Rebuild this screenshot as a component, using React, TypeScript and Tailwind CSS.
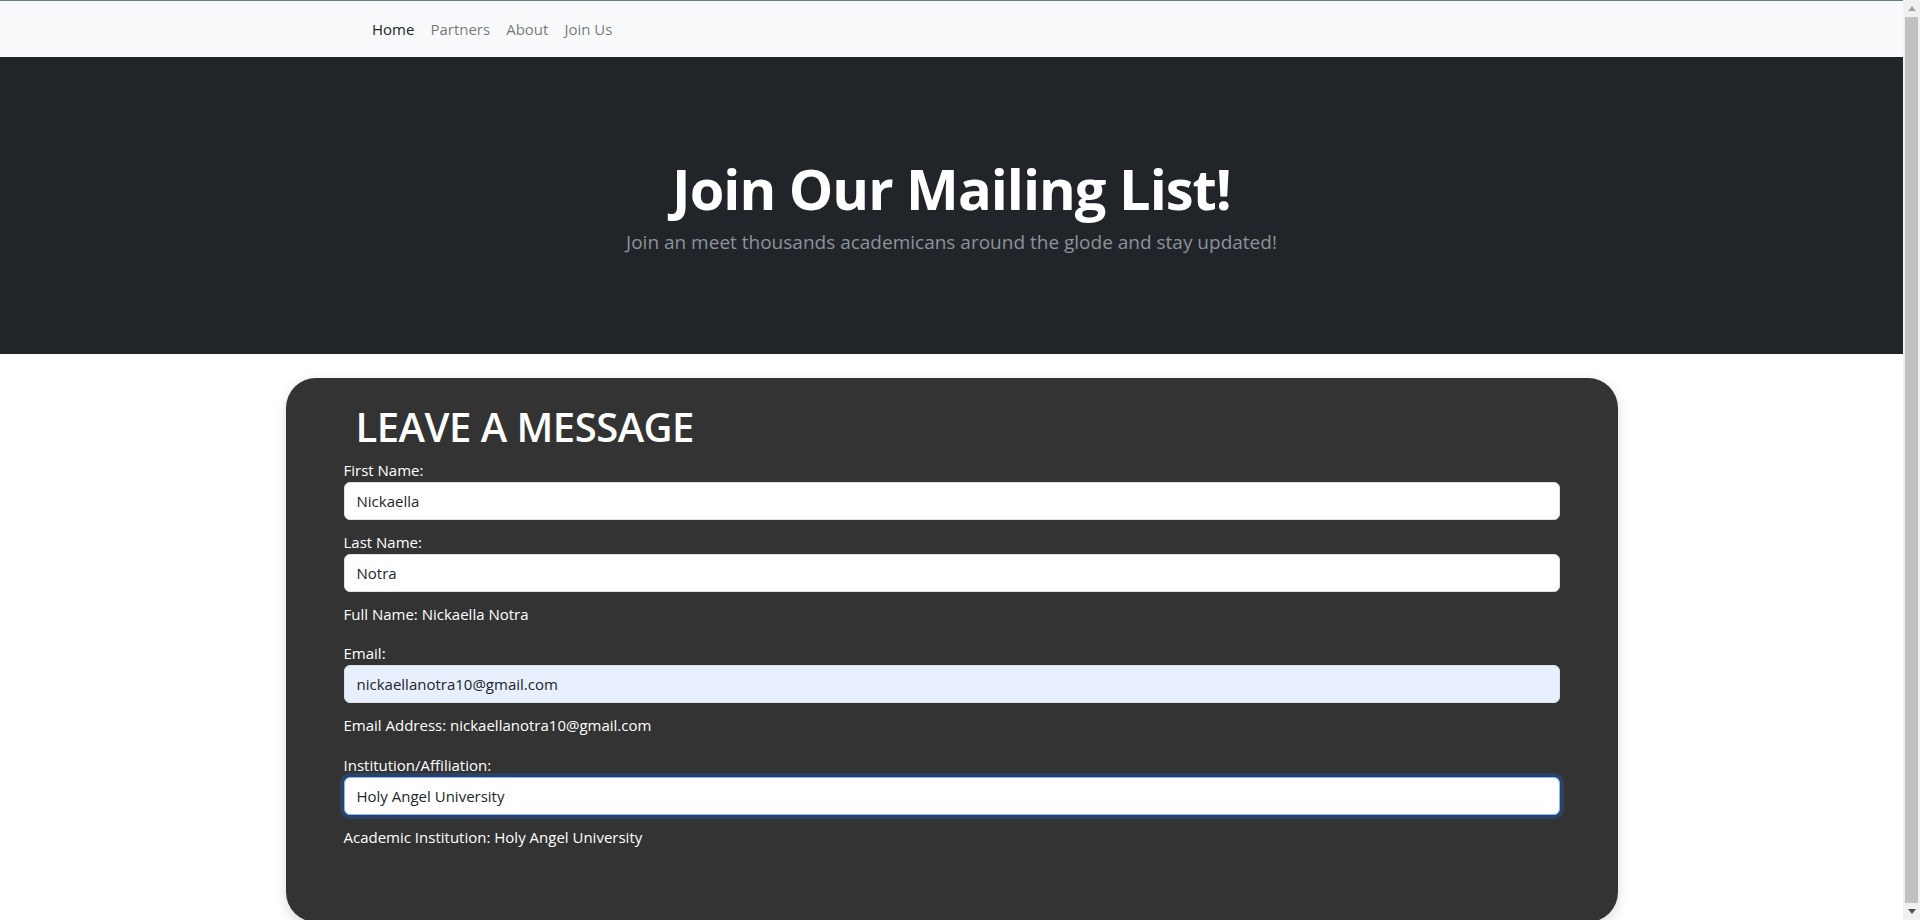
const Field = ({
	label,
	value,
	className = "bg-white",
	focused = false,
}: {
	label: string;
	value: string;
	className?: string;
	focused?: boolean;
}) => (
	<div>
		<label className="block text-[15px] leading-6 text-white">{label}</label>
		<input
			readOnly
			value={value}
			className={`block h-[38px] w-full rounded-md border px-3 text-[15px] text-[#212529] outline-none ${className} ${
				focused
					? "border-[#86b7fe] shadow-[0_0_0_4px_rgba(13,110,253,0.25)]"
					: "border-[#dee2e6]"
			}`}
		/>
	</div>
);

const Scrollbar = () => (
	<aside className="flex h-full w-[17px] shrink-0 flex-col bg-[#f1f1f1]">
		<div className="flex h-[17px] items-center justify-center">
			<svg width="8" height="5" viewBox="0 0 8 5">
				<path d="M0 5 L4 0 L8 5 Z" fill="#a3a3a3" />
			</svg>
		</div>
		<div className="mx-[2px] flex-1 bg-[#c1c1c1]" />
		<div className="flex h-[17px] items-center justify-center">
			<svg width="8" height="5" viewBox="0 0 8 5">
				<path d="M0 0 L8 0 L4 5 Z" fill="#505050" />
			</svg>
		</div>
	</aside>
);

const App = () => {
	return (
		<div className="flex h-screen overflow-hidden bg-white font-['Open_Sans',sans-serif]">
			<div className="w-[1903px] shrink-0">
				<nav className="h-[57px] border-t border-[#6c7a83] bg-[#f8f9fa]">
					<ul className="flex h-full items-center pl-[364px] text-[15px]">
						<li>
							<a href="#home" className="block px-2 py-2 text-[#212529]">
								Home
							</a>
						</li>
						<li>
							<a href="#partners" className="block px-2 py-2 text-black/55">
								Partners
							</a>
						</li>
						<li>
							<a href="#about" className="block px-2 py-2 text-black/55">
								About
							</a>
						</li>
						<li>
							<a href="#join" className="block px-2 py-2 text-black/55">
								Join Us
							</a>
						</li>
					</ul>
				</nav>

				<header className="h-[297px] bg-[#212529] pt-[98px] text-center">
					<h1 className="text-[56px] font-bold leading-[1.2] tracking-[-1px] text-white">
						Join Our Mailing List!
					</h1>
					<p className="mt-[5px] text-[19px] leading-[30px] text-[#8c939a]">
						Join an meet thousands academicans around the glode and stay updated!
					</p>
				</header>

				<main className="pt-6">
					<section className="mx-auto h-[544px] w-[1332px] rounded-[30px] bg-[#333333] px-[58px] pt-[25px] shadow-[0_4px_12px_rgba(0,0,0,0.15)]">
						<h2 className="mb-[7px] pl-3 text-[40px] font-semibold leading-[48px] tracking-[-0.5px] text-white">
							LEAVE A MESSAGE
						</h2>
						<Field label="First Name:" value="Nickaella" />
						<div className="mt-[10px]">
							<Field label="Last Name:" value="Notra" />
						</div>
						<p className="mt-[10px] text-[15px] leading-6 text-white">
							Full Name: Nickaella Notra
						</p>
						<div className="mt-[15px]">
							<Field
								label="Email:"
								value="nickaellanotra10@gmail.com"
								className="bg-[#e8f0fe]"
							/>
						</div>
						<p className="mt-[10px] text-[15px] leading-6 text-white">
							Email Address: nickaellanotra10@gmail.com
						</p>
						<div className="mt-4">
							<Field
								label="Institution/Affiliation:"
								value="Holy Angel University"
								focused
							/>
						</div>
						<p className="mt-[10px] text-[15px] leading-6 text-white">
							Academic Institution: Holy Angel University
						</p>
					</section>
				</main>
			</div>
			<Scrollbar />
		</div>
	);
};

export default App;
